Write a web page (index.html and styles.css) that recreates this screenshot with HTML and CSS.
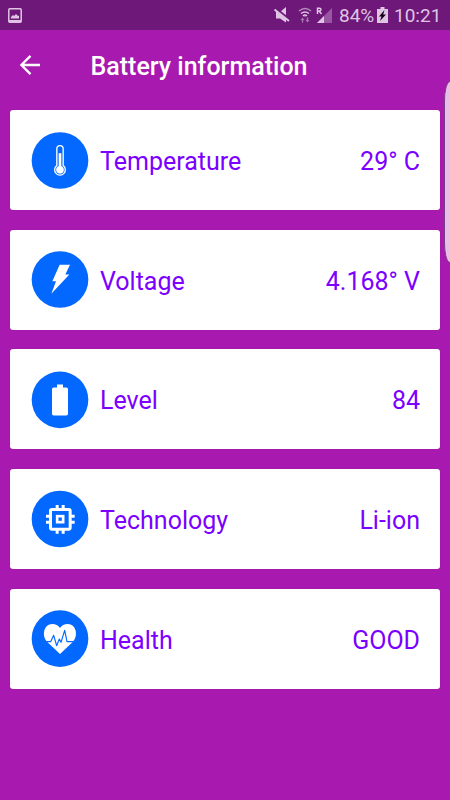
FILE: index.html
```html
<!DOCTYPE html>
<html lang="en">
<head>
<meta charset="utf-8">
<title>Battery information</title>
<link rel="stylesheet" href="styles.css">
</head>
<body>
<div class="status">
  <svg class="picture" width="14" height="15" viewBox="0 0 14 15"><rect x=".8" y=".8" width="12.4" height="13.4" rx="1" fill="none" stroke="#dfc5e3" stroke-width="1.5"/><path d="M3 10.5V9l2-2 1.2 1L8 6l1.400 1.500L11 8v2.500zM1 12h12v2H1z" fill="#dfc5e3"/></svg>
  <div class="status-icons">
    <svg class="mute" width="16" height="16" viewBox="0 0 16 16"><path d="M2 5h4l6-5v15.500L6 11.500H2z" fill="#dfc5e3"/><path d="M1 1.500l14 11" stroke="#6e1879" stroke-width="3"/><path d="M.5 2.500l14.500 11.500" stroke="#dfc5e3" stroke-width="2"/></svg>
    <svg class="wifi" width="14" height="16" viewBox="0 0 14 16"><g fill="none" stroke-width="1.500"><path d="M1 4q6-5 12 0" stroke="#b38bbb"/><path d="M3 6.500q4-3 8 0" stroke="#dfc5e3"/><path d="M5 8.800q2-1.500 4 0" stroke="#dfc5e3"/></g><path d="M6 9h2l-1 1.500zM2.500 13l2-2.500 2 2.500H5.200v2.500H3.800V13zM7.500 13h1.300v-2.500h1.400V13h1.300l-2 2.500z" fill="#a779b0"/></svg>
    <svg class="signal" width="17" height="17" viewBox="0 0 17 17"><path d="M16 1v15H1z" fill="#9956a2"/><path d="M9 1v15h7V1z" fill="#9956a2" opacity="0"/><path d="M0 0h7v8H0z" fill="#6e1879"/><path d="M1.500 7V1.200h2q1.500 0 1.500 1.400T3.500 4h-2M3.200 4L5.500 7" fill="none" stroke="#dfc5e3" stroke-width="1.500"/><path d="M8 9v7H1z" fill="#dfc5e3"/></svg>
    <span class="percent">84%</span>
    <svg class="cell" width="11" height="16" viewBox="0 0 11 16"><path d="M3.500 0h4v2H11v14H0V2h3.500z" fill="#dfc5e3"/><path d="M7.500 3L2 9.500h2.500L3 14l6-6.500H6.200z" fill="#180019"/></svg>
    <span class="time">10:21</span>
  </div>
</div>
<header class="toolbar">
  <svg class="back" width="20" height="20" viewBox="0 0 20 20"><path d="M20 10H1.500M10.500 .9L1.400 10l9.100 9.100" fill="none" stroke="#fff" stroke-width="2.300"/></svg>
  <h1>Battery information</h1>
</header>
<main class="list">
  <section class="card">
    <svg class="icon" viewBox="33 34.5 171 171"><circle cx="120" cy="120" r="85" fill="#0368ff"/><path d="M110.500 135V85a9.500 9.500 0 0 1 19 0v50a16 16 0 1 1-19 0z" fill="none" stroke="#fff" stroke-width="4"/><circle cx="120" cy="148" r="11.500" fill="#fff"/><path d="M116 98h8v45h-8z" fill="#fff"/></svg>
    <span class="name">Temperature</span><span class="value">29° C</span>
  </section>
  <section class="card">
    <svg class="icon" viewBox="33 33.5 171 171"><circle cx="120" cy="119" r="85" fill="#0368ff"/><path d="M119 75h31l-14 29h12l-54 58 14-38H97z" fill="#fff"/></svg>
    <span class="name">Voltage</span><span class="value">4.168° V</span>
  </section>
  <section class="card">
    <svg class="icon" viewBox="33 31.5 171 171"><circle cx="120" cy="118" r="85" fill="#0368ff"/><path d="M111 72h18v9h10q5 0 5 5v74q0 5-5 5h-38q-5 0-5-5V86q0-5 5-5h10z" fill="#fff"/></svg>
    <span class="name">Level</span><span class="value">84</span>
  </section>
  <section class="card">
    <svg class="icon" viewBox="33 30 171 171"><circle cx="120" cy="117" r="85" fill="#0368ff"/><g fill="none" stroke="#fff" stroke-width="9"><rect x="91.500" y="88.500" width="59" height="59" rx="4"/><path d="M111.500 75v13M129.500 75v13M111.500 148v13M129.500 148v13M78 108.500h13M78 126.500h13M151 108.500h13M151 126.500h13"/><rect x="111.500" y="108.500" width="18" height="18" stroke-width="8"/></g></svg>
    <span class="name">Technology</span><span class="value">Li-ion</span>
  </section>
  <section class="card">
    <svg class="icon" viewBox="33 30 171 171"><circle cx="120" cy="116" r="85" fill="#0368ff"/><path d="M120 162L81 125C65 109 70 72 97 72q15 0 23 12 8-12 23-12c27 0 32 37 16 53z" fill="#fff"/><path d="M70 125h22l9-19 9 31 8-20 5 10 11-36 7 34h30" fill="none" stroke="#0368ff" stroke-width="3.500" stroke-linejoin="round"/></svg>
    <span class="name">Health</span><span class="value">GOOD</span>
  </section>
</main>
<div class="edge-handle"></div>
</body>
</html>
```

FILE: styles.css
```css
* { box-sizing: border-box; }
body {
  margin: 0;
  height: 800px;
  position: relative;
  overflow: hidden;
  background: #a81aaf;
  font-family: Roboto, "Liberation Sans", sans-serif;
}
svg { display: block; flex: none; overflow: visible; }
.status {
  height: 30px;
  padding: 0 9px 0 8px;
  display: flex;
  align-items: center;
  justify-content: space-between;
  background: #6e1879;
  color: #dfc5e3;
  font-size: 19px;
  line-height: 30px;
}
.status-icons { display: flex; align-items: center; }
.mute { margin-right: 8px; }
.wifi { margin-right: 4px; }
.signal { margin-right: 6px; }
.percent { width: 35px; margin-right: 3px; padding-top: 2px; }
.cell { margin-right: 6px; }
.time { width: 47px; padding-top: 2px; }
.toolbar {
  height: 80px;
  padding: 0 20px 8px;
  display: flex;
  align-items: center;
}
.back { margin-top: -2px; }
.toolbar h1 {
  margin: 2px 0 0 50.500px;
  font-size: 25px;
  font-weight: 500;
  line-height: 32px;
  color: #fff;
  white-space: nowrap;
}
.list {
  display: flex;
  flex-direction: column;
  gap: 19.670px;
  padding: 0 10px;
}
.card {
  height: 100px;
  padding: 0 20px 0 21px;
  display: flex;
  align-items: center;
  background: #fff;
  border-radius: 3px;
  box-shadow: 0 0 1px #86108f;
  color: #7b00ff;
  font-size: 25px;
  line-height: 32px;
  white-space: nowrap;
}
.icon { width: 57px; height: 57px; margin-right: 12px; }
.name, .value { padding-top: 4px; }
.value { margin-left: auto; }
.edge-handle {
  position: absolute;
  left: 444px;
  top: 81px;
  width: 12px;
  height: 182px;
  background: #e5bfe7;
  border: 1px solid #7c3c82;
  border-radius: 6px / 20px;
}
```
